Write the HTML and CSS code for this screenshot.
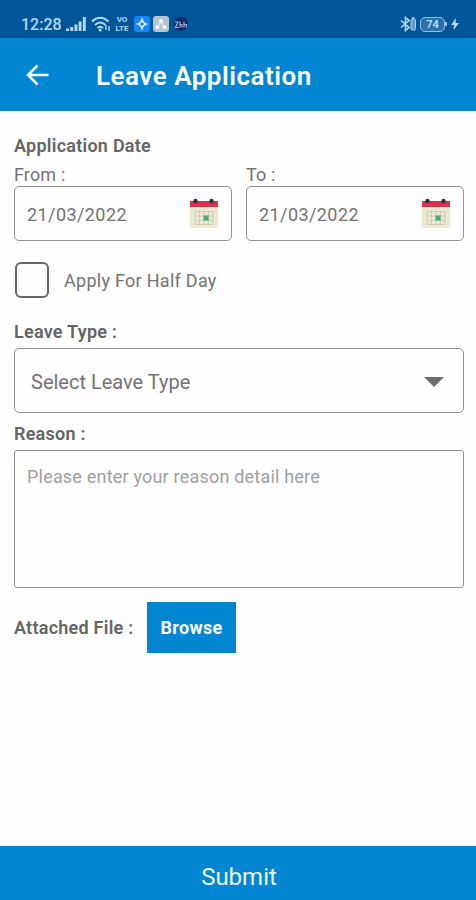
FILE: index.html
```html
<!DOCTYPE html>
<html lang="en">
<head>
<meta charset="utf-8">
<title>Leave Application</title>
<link rel="stylesheet" href="styles.css">
</head>
<body>
<svg class="defs" aria-hidden="true">
  <symbol id="calendar" viewBox="0 0 30 32">
    <path d="M1 8h28v22H1z" fill="#ece9d3"/>
    <path d="M1 3h28v6H1z" fill="#dc2f4c"/>
    <circle cx="6.500" cy="3" r="2.200" fill="#293044"/><circle cx="22.500" cy="3" r="2.200" fill="#293044"/>
    <path d="M6 13.500h18v13H6zM6 18h18M6 22.500h18M10.500 13.500v13M15 13.500v13M19.500 13.500v13" fill="none" stroke="#c9c6ae" stroke-width=".9"/>
    <path d="M14.500 17.500h5v5h-5z" fill="#3fae7c"/>
  </symbol>
</svg>
<div class="screen">
  <div class="status">
    <span class="clock">12:28</span>
    <svg class="signal" viewBox="0 0 20 14" width="20" height="14"><path d="M1.500 14v-2.500M5.700 14v-4M9.900 14V7.500M14.100 14V4.500M18.300 14V0" stroke="#b5d8f2" stroke-width="2.900"/></svg>
    <svg class="wifi" viewBox="0 0 20 16" width="20" height="16"><g fill="none" stroke="#b5d8f2" stroke-width="2"><path d="M1 5.500Q9 -2 17.500 5.500M4 9Q9.200 4 14.500 9M6.500 12Q9.200 9.500 12 12"/></g><circle cx="9.200" cy="14" r="1.500" fill="#b5d8f2"/><path d="M15 9v5M18 10v5" stroke="#b5d8f2" stroke-width="1.300"/></svg>
    <span class="volte"><span>VO</span><span>LTE</span></span>
    <svg class="app" viewBox="0 0 16 16" width="16" height="16"><rect width="16" height="16" rx="3" fill="#1686f8"/><path d="M8 3.500q1 3.500 4 4.500Q9 9 8 12.500 7 9 4 8 7 7 8 3.500z" fill="none" stroke="#d9efff" stroke-width="1.500"/></svg>
    <svg class="app second" viewBox="0 0 16 16" width="16" height="16"><rect width="16" height="16" rx="3" fill="#b9c4d3"/><path d="M8 5L5 11M8 5l3 6" stroke="#f2f5f9" stroke-width="1"/><g fill="#f5f7fa"><circle cx="8" cy="5" r="2"/><circle cx="4.500" cy="11" r="2"/><circle cx="11.500" cy="11" r="2"/></g></svg>
    <svg class="app third" viewBox="0 0 14 14" width="14" height="14"><circle cx="7" cy="7" r="7" fill="#182a6c"/><path d="M1 5h3L1.500 10.500H5M6 4.500v6M6 7.500h2v3M10 4.500v6M10 7.500h2.500v3" fill="none" stroke="#9dabd0" stroke-width="1.200"/></svg>
    <svg class="bluetooth" viewBox="0 0 17 16" width="17" height="16"><path d="M1 4.500l8 7-3.500 3v-13L9 4.500l-8 7" fill="none" stroke="#b5d8f2" stroke-width="1.600"/><rect x="11" y="3" width="4.500" height="11" rx="1.500" fill="#5e9acc" stroke="#b5d8f2"/><path d="M12 2h2.500" stroke="#b5d8f2" stroke-width="1.500"/></svg>
    <span class="battery">74</span><span class="nub"></span>
    <svg class="bolt" viewBox="0 0 8 12" width="8" height="12"><path d="M5 0L0 7h3L2.500 12 8 5H4.500z" fill="#b5d8f2"/></svg>
  </div>
  <header class="bar">
    <svg class="back" viewBox="0 0 24 22" width="24" height="22"><path d="M22.500 11H3M11.500 1.500L2 11l9.500 9.500" fill="none" stroke="#f3faff" stroke-width="2.600"/></svg>
    <h1>Leave Application</h1>
  </header>
  <main>
    <h2 class="label">Application Date</h2>
    <div class="dates">
      <div class="date"><span class="caption">From :</span>
        <div class="box field"><span>21/03/2022</span><svg width="30" height="32"><use href="#calendar"/></svg></div></div>
      <div class="date"><span class="caption">To :</span>
        <div class="box field"><span>21/03/2022</span><svg width="30" height="32"><use href="#calendar"/></svg></div></div>
    </div>
    <div class="half"><span class="check"></span><span class="half-text">Apply For Half Day</span></div>
    <div class="label type-label">Leave Type :</div>
    <div class="box select"><span>Select Leave Type</span><svg width="20" height="10" viewBox="0 0 20 10"><path d="M0 0h20L10 10z" fill="#6c6c6c"/></svg></div>
    <div class="label reason-label">Reason :</div>
    <div class="box reason"><span>Please enter your reason detail here</span></div>
    <div class="attach"><span class="label file-label">Attached File :</span><span class="browse"><span>Browse</span></span></div>
  </main>
  <footer class="submit"><span>Submit</span></footer>
</div>
</body>
</html>
```

FILE: styles.css
```css
* { box-sizing: border-box; }
body { margin: 0; font-family: Roboto, sans-serif; background: #fefefe; color: #737373; }
svg { display: block; flex: none; }
.defs { display: none; }
.screen { width: 476px; height: 900px; display: flex; flex-direction: column; white-space: nowrap; }
.status { height: 38px; background: #01569a; display: flex; align-items: center; padding: 10px 17px 0 21px; color: #b5d8f2; }
.clock { font-size: 16px; font-weight: 500; width: 45px; }
.wifi { margin-left: 5px; }
.volte { display: flex; flex-direction: column; width: 16px; margin-left: 3px; font-size: 8px; line-height: 9px; font-weight: 700; align-items: center; }
.app { margin-left: 4px; }
.second { margin-left: 3px; }
.third { margin-left: 5px; }
.bluetooth { margin-left: auto; }
.battery { width: 25px; height: 15px; margin-left: 3px; border: 1.5px solid #8fc0e6; border-radius: 5px; font-size: 11px; line-height: 13px; font-weight: 700; text-align: center; background: #2c70aa; }
.nub { width: 2px; height: 4px; background: #8fc0e6; }
.bolt { margin-left: 4px; }
.bar { height: 73px; background: #0286d2; display: flex; align-items: center; padding-left: 26px; color: #f8fcff; }
h1 { margin: 2px 0 0 46px; font-size: 26px; font-weight: 600; letter-spacing: .5px; line-height: 32px; }
main { flex: 1; padding: 25px 12px 0 14px; }
.label { margin: 0; font-size: 18px; font-weight: 600; line-height: 20px; letter-spacing: .25px; color: #646464; }
.dates { display: grid; grid-template-columns: 1fr 1fr; gap: 14px; margin-top: 8px; }
.caption { display: block; height: 22px; font-size: 18px; line-height: 22px; letter-spacing: .15px; }
.box { border: 1.5px solid #929292; border-radius: 5px; display: flex; }
.field { height: 55px; align-items: center; justify-content: space-between; padding: 1px 12px 0; font-size: 18px; letter-spacing: .42px; }
.half { display: flex; align-items: center; height: 36px; margin-top: 21px; }
.check { width: 34px; height: 36px; margin-left: 1px; border: 2.5px solid #676767; border-radius: 6px; }
.half-text { margin-left: 15px; font-size: 18px; letter-spacing: .28px; }
.type-label { margin-top: 24px; }
.select { height: 65px; margin-top: 6px; padding: 2px 19px 0 16px; align-items: center; justify-content: space-between; font-size: 20px; }
.reason-label { margin-top: 11px; }
.reason { height: 138px; margin-top: 6px; padding: 15px 12px; color: #a0a0a0; font-size: 18px; line-height: 22px; letter-spacing: .2px; border-radius: 3px; }
.attach { display: flex; align-items: center; margin-top: 14px; }
.file-label { width: 133px; }
.browse { width: 89px; height: 51px; background: #0286d2; color: #f8fcff; display: flex; align-items: center; justify-content: center; font-size: 18px; font-weight: 700; letter-spacing: .3px; }
.submit { height: 54px; background: #0286d2; color: #edf8ff; display: flex; align-items: center; justify-content: center; padding: 7px 0 0 2px; font-size: 24px; }
```
